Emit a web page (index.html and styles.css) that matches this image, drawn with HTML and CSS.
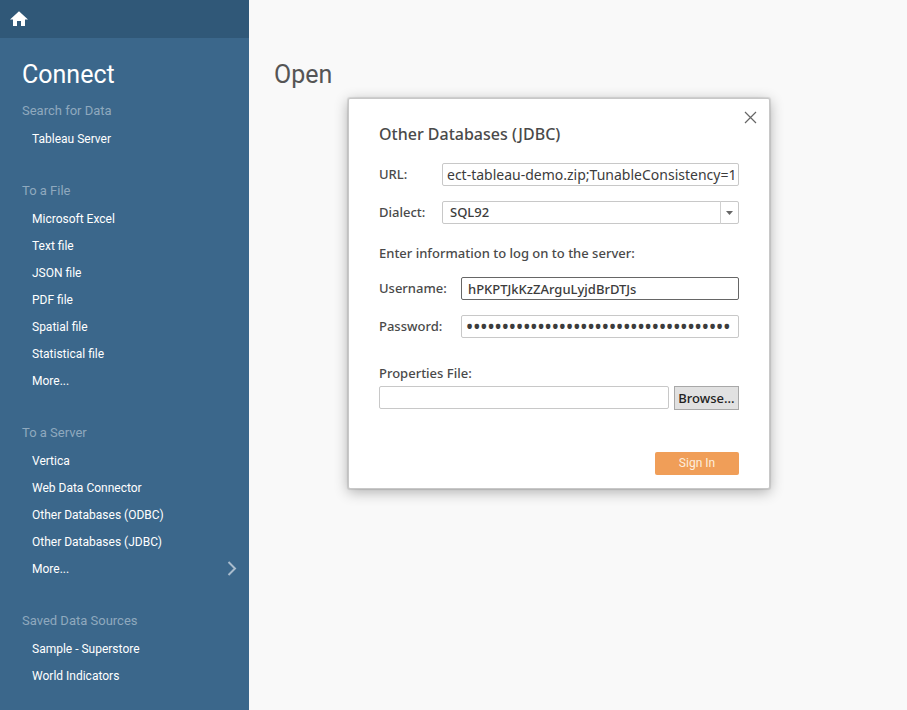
FILE: index.html
```html
<!DOCTYPE html>
<html lang="en">
<head>
<meta charset="utf-8">
<meta name="viewport" content="width=device-width, initial-scale=1">
<title>Tableau</title>
<link rel="stylesheet" href="styles.css">
</head>
<body>
<div class="app">
  <aside class="sidebar">
    <header class="topbar">
      <a class="home" href="#" aria-label="Home">
        <svg width="18" height="16" viewBox="0 0 18 16" aria-hidden="true"><path fill="#fff" d="M9 0.3 18 8.4H15V15H11V10H7V15H3V8.4H0Z"/></svg>
      </a>
    </header>
    <nav class="connect">
      <h1 class="title">Connect</h1>
      <section class="group">
        <h2 class="group-title">Search for Data</h2>
        <ul class="links">
          <li><a href="#">Tableau Server</a></li>
        </ul>
      </section>
      <section class="group">
        <h2 class="group-title">To a File</h2>
        <ul class="links">
          <li><a href="#">Microsoft Excel</a></li>
          <li><a href="#">Text file</a></li>
          <li><a href="#">JSON file</a></li>
          <li><a href="#">PDF file</a></li>
          <li><a href="#">Spatial file</a></li>
          <li><a href="#">Statistical file</a></li>
          <li><a href="#">More...</a></li>
        </ul>
      </section>
      <section class="group">
        <h2 class="group-title">To a Server</h2>
        <ul class="links">
          <li><a href="#">Vertica</a></li>
          <li><a href="#">Web Data Connector</a></li>
          <li><a href="#">Other Databases (ODBC)</a></li>
          <li><a href="#">Other Databases (JDBC)</a></li>
          <li><a class="more" href="#">More...
            <svg width="10" height="17" viewBox="0 0 10 17" aria-hidden="true"><path d="M1.5 1 8 7.5 1.5 14" fill="none" stroke="#a9bccd" stroke-width="2"/></svg></a></li>
        </ul>
      </section>
      <section class="group">
        <h2 class="group-title">Saved Data Sources</h2>
        <ul class="links">
          <li><a href="#">Sample - Superstore</a></li>
          <li><a href="#">World Indicators</a></li>
        </ul>
      </section>
    </nav>
  </aside>
  <main class="main">
    <h1 class="title">Open</h1>
    <form class="dialog" role="dialog" aria-labelledby="dialog-title">
      <button class="close" type="button" aria-label="Close">
        <svg width="13" height="13" viewBox="0 0 13 13" aria-hidden="true"><path d="M1 1 12 12M12 1 1 12" fill="none" stroke="#666" stroke-width="1.2"/></svg>
      </button>
      <h2 class="dialog-title" id="dialog-title">Other Databases (JDBC)</h2>
      <div class="field server">
        <label for="url">URL:</label>
        <input id="url" class="box" type="text" value="ect-tableau-demo.zip;TunableConsistency=1">
      </div>
      <div class="field server">
        <label for="dialect">Dialect:</label>
        <div class="picker">
          <select id="dialect" class="box"><option>SQL92</option></select>
          <span class="arrow"><svg width="7" height="4" viewBox="0 0 7 4" aria-hidden="true"><path d="M0 0H7L3.5 4Z" fill="#666"/></svg></span>
        </div>
      </div>
      <p class="hint">Enter information to log on to the server:</p>
      <div class="field login">
        <label for="username">Username:</label>
        <input id="username" class="box active" type="text" value="hPKPTJkKzZArguLyjdBrDTJs">
      </div>
      <div class="field login">
        <label for="password">Password:</label>
        <input id="password" class="box secret" type="password" value="0000000000000000000000000000000000000">
      </div>
      <div class="file">
        <label for="properties">Properties File:</label>
        <div class="file-row">
          <input id="properties" class="box" type="text">
          <button class="browse" type="button">Browse...</button>
        </div>
      </div>
      <button class="submit" type="submit">Sign In</button>
    </form>
  </main>
</div>
</body>
</html>
```
FILE: styles.css
```css
* {
  box-sizing: border-box;
}

body {
  margin: 0;
  font-family: Roboto, "Liberation Sans", sans-serif;
  color: #555;
  background: #f9f9f9;
}

h1, h2, p, ul {
  margin: 0;
  padding: 0;
  font-weight: 400;
}

ul {
  list-style: none;
}

svg {
  display: block;
}

.app {
  display: flex;
  min-height: 100vh;
}

.sidebar {
  flex: 0 0 249px;
  color: #fff;
  background: #3b678b;
}

.topbar {
  display: flex;
  align-items: center;
  height: 38px;
  padding-left: 10px;
  background: #305878;
}

.title {
  font-size: 25px;
  font-weight: 400;
  line-height: 42px;
}

.connect {
  padding: 16px 0 0 22px;
}

.group {
  margin-bottom: 23px;
}

.group:last-child {
  margin-bottom: 0;
}

.group-title {
  margin-bottom: 1px;
  font-size: 13px;
  line-height: 29px;
  color: #8fa9be;
}

.links a {
  display: block;
  padding-left: 10px;
  font-size: 12px;
  line-height: 27px;
  color: #fff;
  text-decoration: none;
}

.links .more {
  display: flex;
  align-items: center;
  justify-content: space-between;
  padding-right: 12px;
}

.main {
  position: relative;
  flex: 1;
  padding: 54px 25px;
}

.dialog {
  position: absolute;
  top: 98px;
  left: 99px;
  display: flex;
  flex-direction: column;
  width: 422px;
  padding: 24px 30px 13px;
  font-family: "Noto Sans", "Open Sans", sans-serif;
  font-size: 13px;
  font-weight: 500;
  line-height: 23px;
  color: #4a4a4a;
  background: #fff;
  border: 1px solid #c8c8c8;
  border-radius: 2px;
  box-shadow: 0 0 1px 1px rgba(0, 0, 0, 0.1), 0 3px 14px rgba(0, 0, 0, 0.3);
}

.close {
  position: absolute;
  top: 12px;
  right: 12px;
  padding: 0;
  border: 0;
  background: none;
}

.dialog-title {
  margin-bottom: 17px;
  font-size: 16px;
  font-weight: 500;
  line-height: 23px;
}

.field {
  display: grid;
  align-items: center;
  margin-bottom: 15px;
}

.server {
  grid-template-columns: 63px 1fr;
}

.login {
  grid-template-columns: 82px 1fr;
}

.box {
  width: 100%;
  min-width: 0;
  height: 23px;
  padding: 0 4px;
  font: inherit;
  font-size: 14px;
  font-weight: 400;
  color: #3c3c3c;
  background: #fff;
  border: 1px solid #c8c8c8;
  border-radius: 2px;
  outline: 0;
}

.active {
  padding: 1px 6px 0;
  font-size: 13px;
  font-weight: 500;
  border-color: #666;
}

.secret {
  padding-top: 1px;
  font-size: 19px;
  font-weight: 500;
  line-height: 20px;
}

.picker {
  display: grid;
}

.picker .box {
  grid-area: 1 / 1;
  padding: 0 7px 1px;
  font-size: 13px;
  font-weight: 500;
  line-height: 20px;
  appearance: none;
}

.arrow {
  display: grid;
  grid-area: 1 / 1;
  place-items: center;
  justify-self: end;
  width: 19px;
  padding-right: 1px;
  border-left: 1px solid #d0d0d0;
  pointer-events: none;
}

.hint {
  margin: 3px 0 12px;
  font-weight: 500;
}

.file {
  margin-top: 9px;
}

.file-row {
  display: flex;
  gap: 5px;
  margin-top: 1px;
}

.file-row .box {
  flex: 1;
}

.browse {
  flex: 0 0 65px;
  height: 24px;
  padding: 0;
  font: inherit;
  color: #222;
  background: #e1e1e1;
  border: 1px solid #a8a8a8;
}

.submit {
  align-self: flex-end;
  width: 84px;
  height: 23px;
  margin-top: 42px;
  padding: 0 0 2px;
  font: 12px Roboto, sans-serif;
  color: #fdeedd;
  background: #f09e58;
  border: 0;
  border-radius: 2px;
}
```
